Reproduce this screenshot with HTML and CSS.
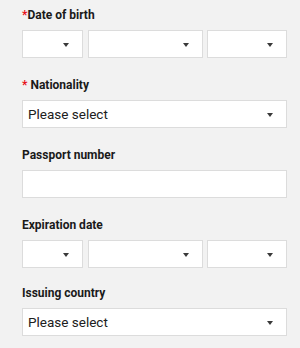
FILE: index.html
```html
<!DOCTYPE html>
<html>
<head>
<meta charset="utf-8">
<link rel="stylesheet" href="styles.css">
</head>
<body>
<form class="form">
  <div class="group">
    <div class="label"><span class="req">*</span>Date of birth</div>
    <div class="row">
      <div class="box sel day"><span class="val"></span><span class="caret"></span></div>
      <div class="box sel month"><span class="val"></span><span class="caret"></span></div>
      <div class="box sel year"><span class="val"></span><span class="caret"></span></div>
    </div>
  </div>
  <div class="group">
    <div class="label"><span class="req">*</span> Nationality</div>
    <div class="box sel"><span class="val">Please select</span><span class="caret"></span></div>
  </div>
  <div class="group">
    <div class="label">Passport number</div>
    <div class="box"></div>
  </div>
  <div class="group">
    <div class="label">Expiration date</div>
    <div class="row">
      <div class="box sel day"><span class="val"></span><span class="caret"></span></div>
      <div class="box sel month"><span class="val"></span><span class="caret"></span></div>
      <div class="box sel year"><span class="val"></span><span class="caret"></span></div>
    </div>
  </div>
  <div class="group last">
    <div class="label">Issuing country</div>
    <div class="box sel"><span class="val">Please select</span><span class="caret"></span></div>
  </div>
</form>
</body>
</html>
```
FILE: styles.css
```css
html, body {
  margin: 0;
  padding: 0;
  background: #f2f2f2;
}
body {
  font-family: Roboto, "Liberation Sans", sans-serif;
  color: #1f1f1f;
}
.form {
  width: 265px;
  padding: 8px 0 0 22px;
}
.group {
  margin-bottom: 20px;
}
.group.last {
  margin-top: -2px;
}
.label {
  font-size: 12px;
  line-height: 14px;
  font-weight: 700;
  color: #1a1a1a;
  margin-bottom: 8px;
}
.req {
  color: #e8111a;
}
.row {
  display: flex;
}
.box {
  box-sizing: border-box;
  height: 28px;
  background: #fff;
  border: 1px solid #dcdcdc;
}
.sel {
  display: flex;
  align-items: center;
  justify-content: space-between;
  padding: 0 13px 0 5px;
}
.val {
  font-size: 13.5px;
  color: #202020;
}
.caret {
  width: 0;
  height: 0;
  border-left: 3.5px solid transparent;
  border-right: 3.5px solid transparent;
  border-top: 4px solid #3a3a3a;
  margin-top: 1px;
}
.day {
  width: 61px;
}
.month {
  width: 115px;
  margin-left: 5px;
}
.year {
  width: 80px;
  margin-left: 4px;
}
```
